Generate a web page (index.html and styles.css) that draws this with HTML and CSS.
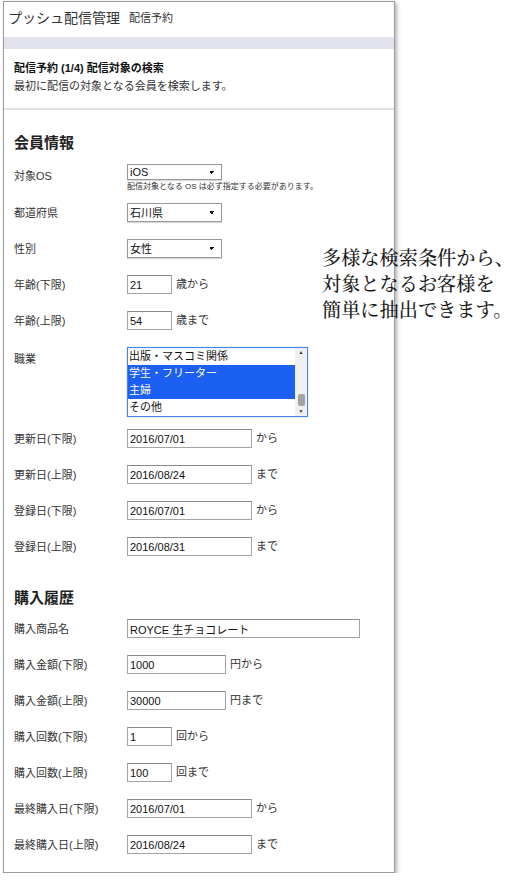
FILE: index.html
```html
<!DOCTYPE html>
<html>

<head>
    <meta charset="utf-8">
    <link rel="stylesheet" href="styles.css">
</head>

<body>
    <div class="panel">
        <div class="topbar">
            <span class="app-title">プッシュ配信管理</span>
            <span class="app-sub">配信予約</span>
        </div>
        <div class="band"></div>

        <div class="intro">
            <p class="intro-title">配信予約 (1/4) 配信対象の検索</p>
            <p class="intro-desc">最初に配信の対象となる会員を検索します。</p>
        </div>

        <div class="section">
            <h2>会員情報</h2>

            <div class="row row-os">
                <label>対象OS</label>
                <div class="field">
                    <select class="pick pick-os">
                        <option>iOS</option>
                        <option>Android</option>
                    </select>
                    <p class="hint">配信対象となる OS は必ず指定する必要があります。</p>
                </div>
            </div>

            <div class="row">
                <label>都道府県</label>
                <select class="pick">
                    <option>石川県</option>
                </select>
            </div>

            <div class="row">
                <label>性別</label>
                <select class="pick">
                    <option>女性</option>
                    <option>男性</option>
                </select>
            </div>

            <div class="row">
                <label>年齢(下限)</label>
                <input type="text" class="w-s" value="21">
                <span class="unit">歳から</span>
            </div>

            <div class="row">
                <label>年齢(上限)</label>
                <input type="text" class="w-s" value="54">
                <span class="unit">歳まで</span>
            </div>

            <div class="row row-list">
                <label>職業</label>
                <div class="listbox">
                    <div class="list-items">
                        <div class="item">出版・マスコミ関係</div>
                        <div class="item selected">学生・フリーター</div>
                        <div class="item selected">主婦</div>
                        <div class="item">その他</div>
                    </div>
                    <div class="scroll">
                        <span class="arrow">&#9650;</span>
                        <div class="track"><div class="thumb"></div></div>
                        <span class="arrow">&#9660;</span>
                    </div>
                </div>
            </div>

            <div class="row">
                <label>更新日(下限)</label>
                <input type="text" class="w-d" value="2016/07/01">
                <span class="unit">から</span>
            </div>

            <div class="row">
                <label>更新日(上限)</label>
                <input type="text" class="w-d" value="2016/08/24">
                <span class="unit">まで</span>
            </div>

            <div class="row">
                <label>登録日(下限)</label>
                <input type="text" class="w-d" value="2016/07/01">
                <span class="unit">から</span>
            </div>

            <div class="row">
                <label>登録日(上限)</label>
                <input type="text" class="w-d" value="2016/08/31">
                <span class="unit">まで</span>
            </div>
        </div>

        <div class="section">
            <h2>購入履歴</h2>

            <div class="row">
                <label>購入商品名</label>
                <input type="text" class="w-l" value="ROYCE 生チョコレート">
            </div>

            <div class="row">
                <label>購入金額(下限)</label>
                <input type="text" class="w-m" value="1000">
                <span class="unit">円から</span>
            </div>

            <div class="row">
                <label>購入金額(上限)</label>
                <input type="text" class="w-m" value="30000">
                <span class="unit">円まで</span>
            </div>

            <div class="row">
                <label>購入回数(下限)</label>
                <input type="text" class="w-s" value="1">
                <span class="unit">回から</span>
            </div>

            <div class="row">
                <label>購入回数(上限)</label>
                <input type="text" class="w-s" value="100">
                <span class="unit">回まで</span>
            </div>

            <div class="row">
                <label>最終購入日(下限)</label>
                <input type="text" class="w-d" value="2016/07/01">
                <span class="unit">から</span>
            </div>

            <div class="row">
                <label>最終購入日(上限)</label>
                <input type="text" class="w-d" value="2016/08/24">
                <span class="unit">まで</span>
            </div>
        </div>
    </div>

    <p class="callout">多様な検索条件から、<br>対象となるお客様を<br>簡単に抽出できます。</p>
</body>

</html>
```

FILE: styles.css
```css
body {
    font-family: "Liberation Sans", "Noto Sans CJK JP", sans-serif;
    background-color: #fff;
    color: #333;
    margin: 0;
    padding: 0;
}

p {
    margin: 0;
}

div.panel {
    width: 390px;
    margin: 1px 0 0 3px;
    background-color: #fff;
    border: 1px solid #9c9c9c;
    box-shadow: 2px 2px 4px rgba(0, 0, 0, 0.3);
    padding-bottom: 1px;
}

.topbar {
    height: 35px;
    box-sizing: border-box;
    padding: 6px 0 0 4px;
    display: flex;
    align-items: flex-start;
}

.app-title {
    font-size: 14px;
    line-height: 20px;
    color: #333;
}

.app-sub {
    font-size: 11px;
    line-height: 20px;
    margin-left: 9px;
    color: #333;
}

.band {
    height: 12px;
    background-color: #e2e2ec;
}

.intro {
    padding: 10px 10px 13px;
    border-bottom: 2px solid #dde3e3;
    font-size: 11px;
    line-height: 18px;
}

.intro-title {
    font-weight: bold;
    color: #111;
}

.intro-desc {
    color: #333;
}

.section {
    padding: 23px 10px 0;
}

.section + .section {
    padding-top: 15px;
}

h2 {
    font-size: 15px;
    line-height: 20px;
    font-weight: bold;
    color: #222;
    margin: 0 0 11px;
}

.row {
    display: flex;
    align-items: center;
    margin-bottom: 17px;
    font-size: 11px;
}

.row label {
    width: 113px;
    flex: none;
    line-height: 16px;
    color: #333;
}

.row-os {
    align-items: flex-start;
    margin-top: 4px;
    margin-bottom: 11px;
}

.row-os label {
    margin-top: 4px;
}

.row-list {
    align-items: flex-start;
    margin-bottom: 12px;
}

.row-list label {
    margin-top: 4px;
}

.hint {
    font-size: 8px;
    line-height: 10px;
    margin-top: 2px;
    color: #333;
    white-space: nowrap;
}

select.pick {
    appearance: none;
    -webkit-appearance: none;
    width: 95px;
    height: 19px;
    box-sizing: border-box;
    border: 1px solid #999;
    border-radius: 0;
    background-color: #fff;
    background-image: linear-gradient(45deg, transparent 50%, #111 50%),
        linear-gradient(135deg, #111 50%, transparent 50%);
    background-position: right 9px center, right 6px center;
    background-size: 3px 3px;
    background-repeat: no-repeat;
    box-shadow: 0 1px 1px rgba(0, 0, 0, 0.15);
    font-family: "Liberation Sans", "Noto Sans CJK JP", sans-serif;
    font-size: 11px;
    color: #111;
    padding: 0 2px;
    margin: 0;
}

select.pick-os {
    height: 16px;
    line-height: 14px;
}

input {
    height: 19px;
    box-sizing: border-box;
    border: 1px solid #a3a3a3;
    border-top-color: #8c8c8c;
    border-radius: 0;
    padding: 0 2px;
    margin: 0;
    font-family: "Liberation Sans", "Noto Sans CJK JP", sans-serif;
    font-size: 11px;
    color: #111;
}

input.w-s {
    width: 45px;
}

input.w-m {
    width: 99px;
}

input.w-d {
    width: 125px;
}

input.w-l {
    width: 233px;
}

.unit {
    margin-left: 4px;
    color: #333;
    margin-top: -3px;
}

.listbox {
    width: 181px;
    height: 70px;
    box-sizing: border-box;
    border: 1px solid #4a86e0;
    box-shadow: 0 0 1px rgba(60, 120, 230, 0.6);
    display: flex;
    background-color: #fff;
}

.list-items {
    flex: 1;
}

.item {
    height: 17px;
    line-height: 17px;
    padding-left: 1px;
    font-size: 11px;
    color: #111;
    white-space: nowrap;
}

.item.selected {
    background-color: #1c5ff3;
    color: #fff;
}

.scroll {
    width: 12px;
    background-color: #efefef;
    display: flex;
    flex-direction: column;
    align-items: center;
}

.arrow {
    font-size: 5px;
    line-height: 9px;
    height: 9px;
    color: #333;
}

.track {
    flex: 1;
    width: 100%;
    display: flex;
    flex-direction: column;
    justify-content: flex-end;
    align-items: center;
}

.thumb {
    width: 7px;
    height: 12px;
    border-radius: 2px;
    background-color: #a2a2a2;
    margin-bottom: 1px;
}

p.callout {
    position: absolute;
    left: 322px;
    top: 244px;
    margin: 0;
    font-family: "Noto Serif CJK JP", "Noto Sans CJK JP", serif;
    font-size: 19.2px;
    line-height: 26px;
    font-weight: 500;
    color: #1a1a1a;
    white-space: nowrap;
}
```
